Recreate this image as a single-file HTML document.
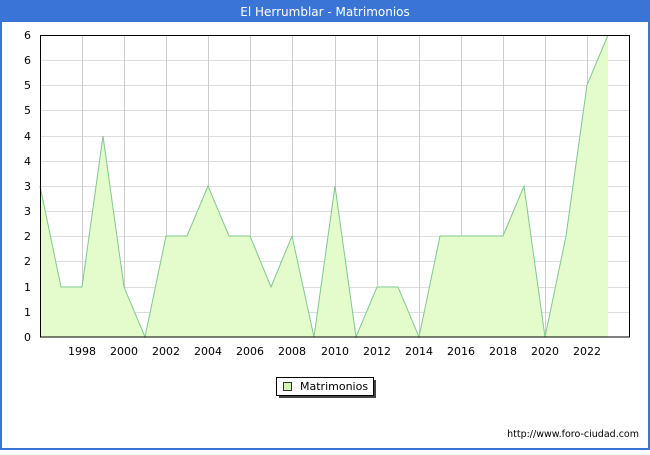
<!DOCTYPE html>
<html><head><meta charset="utf-8"><style>
body{margin:0;background:#fff}
</style></head><body>
<svg width="650" height="450" xmlns="http://www.w3.org/2000/svg" font-family="'DejaVu Sans','Liberation Sans',sans-serif">
<rect x="0" y="0" width="650" height="450" fill="#fff"/>
<rect x="1" y="1" width="648" height="448" fill="none" stroke="#3a75d6" stroke-width="2"/>
<rect x="0" y="0" width="650" height="22" fill="#3a75d6"/>
<text x="325" y="16" fill="#fff" font-size="12" text-anchor="middle">El Herrumblar - Matrimonios</text>
<g stroke="#dddddd" stroke-width="1">
<line x1="40" x2="630" y1="60.5" y2="60.5"/><line x1="40" x2="630" y1="85.5" y2="85.5"/><line x1="40" x2="630" y1="110.5" y2="110.5"/><line x1="40" x2="630" y1="136.5" y2="136.5"/><line x1="40" x2="630" y1="161.5" y2="161.5"/><line x1="40" x2="630" y1="186.5" y2="186.5"/><line x1="40" x2="630" y1="211.5" y2="211.5"/><line x1="40" x2="630" y1="236.5" y2="236.5"/><line x1="40" x2="630" y1="261.5" y2="261.5"/><line x1="40" x2="630" y1="287.5" y2="287.5"/><line x1="40" x2="630" y1="312.5" y2="312.5"/>
</g>
<g stroke="#cccccc" stroke-width="1">
<line x1="82.5" x2="82.5" y1="35" y2="337"/><line x1="124.5" x2="124.5" y1="35" y2="337"/><line x1="166.5" x2="166.5" y1="35" y2="337"/><line x1="208.5" x2="208.5" y1="35" y2="337"/><line x1="250.5" x2="250.5" y1="35" y2="337"/><line x1="292.5" x2="292.5" y1="35" y2="337"/><line x1="335.5" x2="335.5" y1="35" y2="337"/><line x1="377.5" x2="377.5" y1="35" y2="337"/><line x1="419.5" x2="419.5" y1="35" y2="337"/><line x1="461.5" x2="461.5" y1="35" y2="337"/><line x1="503.5" x2="503.5" y1="35" y2="337"/><line x1="545.5" x2="545.5" y1="35" y2="337"/><line x1="587.5" x2="587.5" y1="35" y2="337"/>
</g>
<polygon fill="#e4fccc" points="40,337 40,186 61,287 82,287 103,136 124,287 145,337 166,236 187,236 208,186 229,236 250,236 271,287 292,236 314,337 335,186 356,337 377,287 398,287 419,337 440,236 461,236 482,236 503,236 524,186 545,337 566,236 587,85 608,35 608,337"/>
<polyline fill="none" stroke="#80c890" stroke-width="1" points="40,186 61,287 82,287 103,136 124,287 145,337 166,236 187,236 208,186 229,236 250,236 271,287 292,236 314,337 335,186 356,337 377,287 398,287 419,337 440,236 461,236 482,236 503,236 524,186 545,337 566,236 587,85 608,35"/>
<rect x="40.5" y="35.5" width="589" height="301.5" fill="none" stroke="#000" stroke-width="1"/>
<g font-size="11" fill="#000" text-anchor="end">
<text x="31" y="39">6</text><text x="31" y="64">6</text><text x="31" y="89">5</text><text x="31" y="114">5</text><text x="31" y="140">4</text><text x="31" y="165">4</text><text x="31" y="190">3</text><text x="31" y="215">3</text><text x="31" y="240">2</text><text x="31" y="265">2</text><text x="31" y="291">1</text><text x="31" y="316">1</text><text x="31" y="341">0</text>
</g>
<g font-size="11" fill="#000" text-anchor="middle">
<text x="82" y="355">1998</text><text x="124" y="355">2000</text><text x="166" y="355">2002</text><text x="208" y="355">2004</text><text x="250" y="355">2006</text><text x="292" y="355">2008</text><text x="335" y="355">2010</text><text x="377" y="355">2012</text><text x="419" y="355">2014</text><text x="461" y="355">2016</text><text x="503" y="355">2018</text><text x="545" y="355">2020</text><text x="587" y="355">2022</text>
</g>
<rect x="279" y="380" width="97" height="18" fill="#444"/>
<rect x="276.5" y="377.5" width="97" height="18" fill="#fff" stroke="#000" stroke-width="1"/>
<rect x="283.5" y="382.5" width="8" height="8" fill="#d4f7b0" stroke="#333" stroke-width="1"/>
<text x="300" y="390" font-size="11" fill="#000">Matrimonios</text>
<text x="639" y="437" font-size="9.5" fill="#000" text-anchor="end">http://www.foro-ciudad.com</text>
</svg>
</body></html>
